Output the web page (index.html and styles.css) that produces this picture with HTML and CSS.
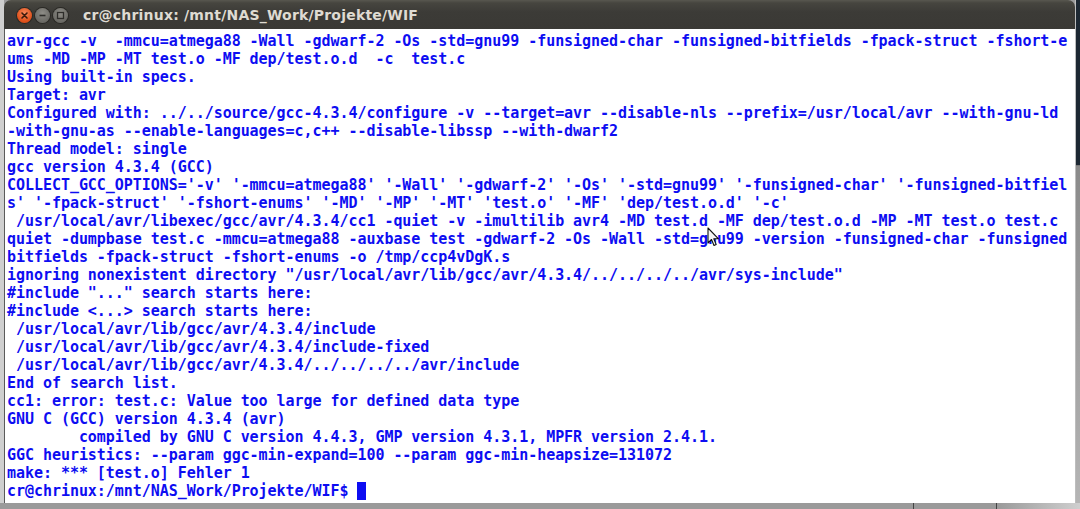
FILE: index.html
```html
<!DOCTYPE html>
<html>
<head>
<meta charset="utf-8">
<link rel="stylesheet" href="styles.css">
</head>
<body>
<div class="desktop">
  <div class="left-strip"></div>
  <div class="window">
    <div class="titlebar">
      <div class="buttons">
        <span class="btn close"><svg width="15" height="15" viewBox="0 0 15 15"><path d="M5 5 L10 10 M10 5 L5 10" stroke="#3a1a0c" stroke-width="1.6" stroke-linecap="round"/></svg></span>
        <span class="btn"><svg width="15" height="15" viewBox="0 0 15 15"><path d="M4.5 7.5 H10.5" stroke="#2e2d2a" stroke-width="1.6"/></svg></span>
        <span class="btn"><svg width="15" height="15" viewBox="0 0 15 15"><rect x="4.5" y="4.5" width="6" height="6" fill="none" stroke="#2e2d2a" stroke-width="1.3"/></svg></span>
      </div>
      <div class="title">cr@chrinux: /mnt/NAS_Work/Projekte/WIF</div>
    </div>
    <div class="terminal"><pre class="screen">avr-gcc -v  -mmcu=atmega88 -Wall -gdwarf-2 -Os -std=gnu99 -funsigned-char -funsigned-bitfields -fpack-struct -fshort-e
ums -MD -MP -MT test.o -MF dep/test.o.d  -c  test.c
Using built-in specs.
Target: avr
Configured with: ../../source/gcc-4.3.4/configure -v --target=avr --disable-nls --prefix=/usr/local/avr --with-gnu-ld
-with-gnu-as --enable-languages=c,c++ --disable-libssp --with-dwarf2
Thread model: single
gcc version 4.3.4 (GCC)
COLLECT_GCC_OPTIONS='-v' '-mmcu=atmega88' '-Wall' '-gdwarf-2' '-Os' '-std=gnu99' '-funsigned-char' '-funsigned-bitfiel
s' '-fpack-struct' '-fshort-enums' '-MD' '-MP' '-MT' 'test.o' '-MF' 'dep/test.o.d' '-c'
 /usr/local/avr/libexec/gcc/avr/4.3.4/cc1 -quiet -v -imultilib avr4 -MD test.d -MF dep/test.o.d -MP -MT test.o test.c
quiet -dumpbase test.c -mmcu=atmega88 -auxbase test -gdwarf-2 -Os -Wall -std=gnu99 -version -funsigned-char -funsigned
bitfields -fpack-struct -fshort-enums -o /tmp/ccp4vDgK.s
ignoring nonexistent directory "/usr/local/avr/lib/gcc/avr/4.3.4/../../../../avr/sys-include"
#include "..." search starts here:
#include &lt;...&gt; search starts here:
 /usr/local/avr/lib/gcc/avr/4.3.4/include
 /usr/local/avr/lib/gcc/avr/4.3.4/include-fixed
 /usr/local/avr/lib/gcc/avr/4.3.4/../../../../avr/include
End of search list.
cc1: error: test.c: Value too large for defined data type
GNU C (GCC) version 4.3.4 (avr)
        compiled by GNU C version 4.4.3, GMP version 4.3.1, MPFR version 2.4.1.
GGC heuristics: --param ggc-min-expand=100 --param ggc-min-heapsize=131072
make: *** [test.o] Fehler 1
cr@chrinux:/mnt/NAS_Work/Projekte/WIF$ <span class="cursor"> </span></pre>
      <svg class="pointer" width="14" height="22" viewBox="0 0 14 22"><path d="M1 1 L1 16 L4.5 12.5 L7 18.5 L9.2 17.6 L6.8 11.8 L11.5 11.8 Z" fill="#f4f4f4" stroke="#111" stroke-width="1.1" stroke-linejoin="round"/></svg>
    </div>
  </div>
  <div class="right-strip">
    <div class="rs-top"></div>
    <div class="rs-bottom"></div>
  </div>
</div>
<div class="bottom-strip">
  <span class="seg s1"></span>
  <span class="seg s2"></span>
  <span class="seg s3"></span>
</div>
</body>
</html>
```

FILE: styles.css
```css
html, body {
  margin: 0;
  padding: 0;
}
body {
  width: 1080px;
  height: 509px;
  overflow: hidden;
  background: #9c9c9c;
}
.desktop {
  display: flex;
  height: 503px;
}
.left-strip {
  width: 4px;
  background: #cfcfcf;
  flex: none;
}
.window {
  width: 1071px;
  flex: none;
  display: flex;
  flex-direction: column;
  position: relative;
}
.titlebar {
  height: 29px;
  flex: none;
  display: flex;
  align-items: center;
  background: linear-gradient(#58574f 0px, #46453f 3px, #3c3b37 12px, #3a3935 29px);
  border-radius: 7px 7px 0 0;
  padding-left: 13px;
  box-sizing: border-box;
}
.buttons {
  display: flex;
  gap: 3px;
  margin-top: 1px;
}
.btn {
  width: 15px;
  height: 15px;
  border-radius: 50%;
  background: radial-gradient(circle at 50% 35%, #8e8d87, #6a6964 70%);
  box-shadow: 0 0 0 1px #2a2925;
  display: flex;
}
.btn.close {
  background: radial-gradient(circle at 50% 35%, #f6875a, #e0521c 65%, #c9410f);
}
.title {
  margin-left: 15px;
  font-family: "DejaVu Sans", sans-serif;
  font-weight: bold;
  font-size: 14px;
  letter-spacing: 0.2px;
  color: #dfdbd2;
}
.terminal {
  flex: 1;
  background: #ffffff;
  border-left: 1px solid #5a5a5a;
  padding: 3px 0 0 2px;
  position: relative;
  overflow: hidden;
}
.screen {
  margin: 0;
  font-family: "DejaVu Sans Mono", monospace;
  font-weight: bold;
  font-size: 15px;
  letter-spacing: -0.045px;
  line-height: 18px;
  color: #0d0df2;
  white-space: pre;
}
.cursor {
  background: #0d0df2;
}
.pointer {
  position: absolute;
  left: 702px;
  top: 198px;
}
.right-strip {
  width: 5px;
  flex: none;
  display: flex;
  flex-direction: column;
  border-left: 1px solid #bdbdbd;
}
.rs-top {
  height: 165px;
  background: #1d2833;
  border-bottom: 1px solid #777;
}
.rs-bottom {
  flex: 1;
  background: linear-gradient(#8a8a8a, #b5b5b5);
}
.bottom-strip {
  height: 6px;
  display: flex;
  background: #9a9a9a;
}
.seg {
  height: 6px;
}
.s1 { width: 913px; border-right: 1px solid #444; }
.s2 { width: 82px; border-right: 1px solid #444; }
.s3 { flex: 1; background: linear-gradient(90deg, #9a9a9a, #cfcfcf); }
```
